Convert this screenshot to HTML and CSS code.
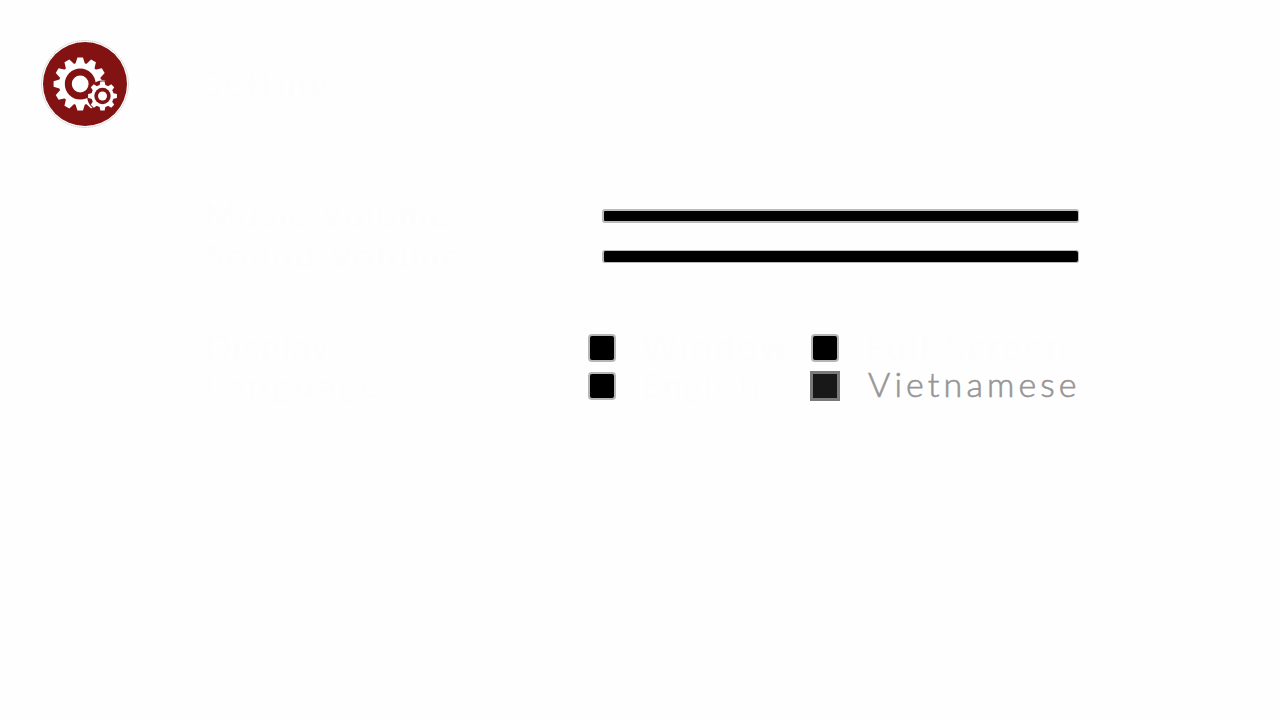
FILE: index.html
```html
<!DOCTYPE html>
<html lang="en">
<head>
<meta charset="utf-8">
<title>Setting</title>
<link rel="stylesheet" href="styles.css">
</head>
<body>
<header class="header">
  <svg class="logo" viewBox="0 0 90 90" aria-hidden="true">
    <defs>
      <path id="tooth" d="M-4.8-20L-2.8-26.6H2.8L4.8-20Z"/>
      <g id="teeth"><use href="#tooth"/><use href="#tooth" transform="rotate(30)"/><use href="#tooth" transform="rotate(60)"/></g>
      <path id="cog" d="M-3.1-10L-2.1-14.4H2.1L3.1-10Z"/>
      <g id="cogs"><use href="#cog"/><use href="#cog" transform="rotate(45)"/></g>
      <g id="small"><circle r="11.2"/><use href="#cogs"/><use href="#cogs" transform="rotate(90)"/><use href="#cogs" transform="rotate(180)"/><use href="#cogs" transform="rotate(270)"/></g>
    </defs>
    <circle cx="45" cy="44" r="43.4" fill="#fff" stroke="#bdbdbd" stroke-width=".8" stroke-dasharray="1.5 .7"/>
    <circle cx="45" cy="44" r="42" fill="#831313"/>
    <g transform="translate(40.2 44)" fill="#fff">
      <circle r="21.2"/>
      <use href="#teeth"/><use href="#teeth" transform="rotate(90)"/><use href="#teeth" transform="rotate(180)"/><use href="#teeth" transform="rotate(270)"/>
      <circle r="15.4" fill="#831313"/>
      <circle r="8.4"/>
    </g>
    <g transform="translate(62.5 56)" fill="#fff">
      <circle r="15.4" fill="#831313"/>
      <use href="#small"/>
      <circle r="8.2" fill="#831313"/>
      <circle r="4.5"/>
    </g>
  </svg>
  <h1 class="title">Setting</h1>
</header>
<main class="settings">
  <section class="group">
    <div class="row sound"><span class="label music">Music Volume</span><div class="slider"></div></div>
    <div class="row sound"><span class="label">Sound Volume</span><div class="slider short"></div></div>
  </section>
  <section class="group choices">
    <div class="row choice"><span class="label display">Display</span>
      <div class="option"><span class="box"></span><span class="name">Window</span></div>
      <div class="option"><span class="box"></span><span class="name">Full Screen</span></div></div>
    <div class="row choice"><span class="label language">Language</span>
      <div class="option"><span class="box"></span><span class="name english">English</span></div>
      <div class="option selected"><span class="box"></span><span class="name vietnamese">Vietnamese</span></div></div>
  </section>
</main>
</body>
</html>
```
FILE: styles.css
```css
* { box-sizing: border-box; }
body {
  margin: 0;
  width: 1280px;
  height: 720px;
  overflow: hidden;
  background: #fefefe;
  color: #fdfdfd;
  font: 300 34px/38px Lato, "Liberation Sans", sans-serif;
  letter-spacing: 4px;
  white-space: nowrap;
}
.header { display: flex; padding: 40px 40px 0; height: 195px; }
.logo { width: 90px; height: 90px; flex: none; }
.title { margin: 24px 0 0 74px; font: inherit; letter-spacing: 3.4px; }
.settings { padding-left: 205px; }
.row { display: grid; align-items: center; }
.label, .name { padding-bottom: 4px; line-height: 34px; }
.music { letter-spacing: 3.4px; }
.display { letter-spacing: 2.8px; }
.language { letter-spacing: 5px; }
.english { letter-spacing: 2.2px; }
.sound { grid-template-columns: 397px 477px; height: 41px; }
.slider {
  height: 14px;
  border: 2px solid #b9bcbb;
  border-right-width: 1px;
  border-radius: 3px;
  background: #000;
}
.short { height: 13px; margin-bottom: 1px; border-width: 1px 1px 1px 2px; }
.choices { margin-top: 52px; }
.choice { grid-template-columns: 383px 223px 290px; height: 38px; }
.option { display: flex; align-items: center; gap: 26px; }
.box {
  width: 28px;
  height: 28px;
  border: 2px solid #b5b8b7;
  border-radius: 4px;
  background: #000;
  flex: none;
}
.selected { color: #979595; gap: 28px; }
.vietnamese { letter-spacing: 4.1px; -webkit-text-stroke: .6px #979595; }
.selected .box {
  width: 30px;
  height: 30px;
  margin-left: -1px;
  border: 3px solid #7a7a7a;
  border-radius: 0;
  background: #181818;
}
```
